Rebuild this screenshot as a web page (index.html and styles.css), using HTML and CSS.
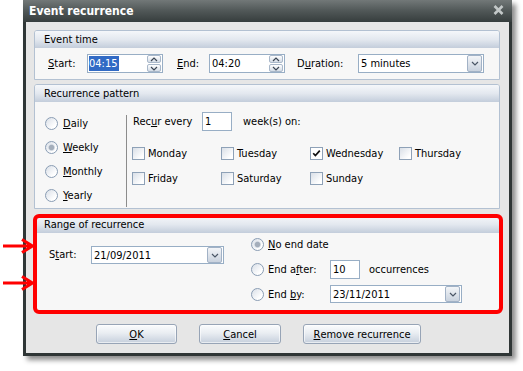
FILE: index.html
```html
<!DOCTYPE html>
<html>
<head>
<meta charset="utf-8">
<link rel="stylesheet" href="styles.css">
</head>
<body>
<div class="dialog">
  <div class="titlebar">
    <span class="title">Event recurrence</span>
    <svg class="close" width="11" height="10" viewBox="0 0 11 10"><path d="M1.5 1 L9.5 9 M9.5 1 L1.5 9" stroke="#c3c8c8" stroke-width="2.6" fill="none"/></svg>
  </div>
  <div class="content">
    <section class="group g-time">
      <div class="ghead">Event time</div>
      <div class="gbody time-row">
        <span class="lbl w-start"><u>S</u>tart:</span>
        <div class="field w-time"><span class="txt"><span class="hl">04:15</span></span>
          <div class="spin"><span class="sb"><svg width="8" height="5" viewBox="0 0 8 5"><path d="M1 4 L4 1 L7 4" stroke="#3c4654" stroke-width="1.2" fill="none"/></svg></span><span class="sb"><svg width="8" height="5" viewBox="0 0 8 5"><path d="M1 1 L4 4 L7 1" stroke="#3c4654" stroke-width="1.2" fill="none"/></svg></span></div>
        </div>
        <span class="lbl w-end"><u>E</u>nd:</span>
        <div class="field w-time"><span class="txt">04:20</span>
          <div class="spin"><span class="sb"><svg width="8" height="5" viewBox="0 0 8 5"><path d="M1 4 L4 1 L7 4" stroke="#3c4654" stroke-width="1.2" fill="none"/></svg></span><span class="sb"><svg width="8" height="5" viewBox="0 0 8 5"><path d="M1 1 L4 4 L7 1" stroke="#3c4654" stroke-width="1.2" fill="none"/></svg></span></div>
        </div>
        <span class="lbl w-dur">D<u>u</u>ration:</span>
        <div class="field w-dursel"><span class="txt">5 minutes</span>
          <span class="ddbtn"><svg width="8" height="5" viewBox="0 0 8 5"><path d="M1 1 L4 4 L7 1" stroke="#4a5666" stroke-width="1.2" fill="none"/></svg></span>
        </div>
      </div>
    </section>

    <section class="group g-pattern">
      <div class="ghead">Recurrence pattern</div>
      <div class="gbody pattern">
        <div class="freq">
          <div class="ropt"><span class="radio"></span><span><u>D</u>aily</span></div>
          <div class="ropt"><span class="radio on"></span><span><u>W</u>eekly</span></div>
          <div class="ropt"><span class="radio"></span><span><u>M</u>onthly</span></div>
          <div class="ropt"><span class="radio"></span><span><u>Y</u>early</span></div>
        </div>
        <div class="sep"></div>
        <div class="weekly">
          <div class="recur">
            <span class="lbl w-recur">Rec<u>u</u>r every</span>
            <div class="field w-num"><span class="txt">1</span></div>
            <span class="weeks">week(s) on:</span>
          </div>
          <div class="days">
            <div class="day"><span class="cb"></span>Monday</div>
            <div class="day"><span class="cb"></span>Tuesday</div>
            <div class="day"><span class="cb on"><svg width="11" height="11" viewBox="0 0 11 11"><path d="M2.2 5.2 L4.4 7.6 L8.8 2.6" stroke="#111" stroke-width="1.7" fill="none"/></svg></span>Wednesday</div>
            <div class="day"><span class="cb"></span>Thursday</div>
            <div class="day"><span class="cb"></span>Friday</div>
            <div class="day"><span class="cb"></span>Saturday</div>
            <div class="day"><span class="cb"></span>Sunday</div>
          </div>
        </div>
      </div>
    </section>

    <section class="group g-range">
      <div class="ghead">Range of recurrence</div>
      <div class="gbody range">
        <div class="rstart">
          <span class="lbl w-rstart">S<u>t</u>art:</span>
          <div class="field w-date"><span class="txt">21/09/2011</span>
            <span class="ddbtn"><svg width="8" height="5" viewBox="0 0 8 5"><path d="M1 1 L4 4 L7 1" stroke="#4a5666" stroke-width="1.2" fill="none"/></svg></span>
          </div>
        </div>
        <div class="rend">
          <div class="eopt"><span class="radio on"></span><span><u>N</u>o end date</span></div>
          <div class="eopt"><span class="radio"></span><span class="w-endlbl">End a<u>f</u>ter:</span>
            <div class="field w-num"><span class="txt">10</span></div><span class="occ">occurrences</span></div>
          <div class="eopt"><span class="radio"></span><span class="w-endlbl">End <u>b</u>y:</span>
            <div class="field w-date2"><span class="txt">23/11/2011</span>
              <span class="ddbtn"><svg width="8" height="5" viewBox="0 0 8 5"><path d="M1 1 L4 4 L7 1" stroke="#4a5666" stroke-width="1.2" fill="none"/></svg></span>
            </div>
          </div>
        </div>
      </div>
    </section>
  </div>
  <div class="buttons">
    <span class="btn b-ok"><u>O</u>K</span>
    <span class="btn b-cancel"><u>C</u>ancel</span>
    <span class="btn b-remove"><u>R</u>emove recurrence</span>
  </div>
</div>
<div class="redbox"></div>
<svg class="arrows" width="40" height="60" viewBox="0 235 40 60">
  <path d="M3 246 L32 246 M22 239.5 L32.5 246 L22 252.5" stroke="#ff0000" stroke-width="3" fill="none"/>
  <path d="M3 283 L32 283 M22 276.5 L32.5 283 L22 289.5" stroke="#ff0000" stroke-width="3" fill="none"/>
</svg>
</body>
</html>
```
FILE: styles.css
```css
html, body {
  margin: 0;
  padding: 0;
  background: #ffffff;
}
body {
  position: relative;
  width: 523px;
  height: 371px;
  overflow: hidden;
  font-family: "DejaVu Sans Condensed", "DejaVu Sans", "Liberation Sans", sans-serif;
  font-stretch: condensed;
  font-size: 11px;
  color: #000;
}
u { text-decoration: underline; text-underline-offset: 1px; }

.dialog {
  margin-left: 23px;
  width: 489px;
  height: 356px;
  box-sizing: border-box;
  background: #e6e6e6;
  border: 3px solid #2f3636;
  border-top: none;
  box-shadow: 4px 4px 5px rgba(0,0,0,0.45);
  display: flex;
  flex-direction: column;
}
.titlebar {
  height: 22px;
  margin: 0 -3px;
  padding: 0 8px 0 6px;
  display: flex;
  align-items: center;
  justify-content: space-between;
  background: linear-gradient(#727878 0%, #535a5a 45%, #363d3d 100%);
  color: #fff;
  font-weight: bold;
  font-size: 12px;
}
.title { margin-top: -1px; }
.close { margin-top: -2px; }

.content {
  padding: 8px 9px 0 8px;
}
.group {
  border: 1px solid #b3c1d2;
  border-radius: 3px 3px 0 0;
  background: #f7f7f7;
}
.ghead {
  height: 17px;
  line-height: 17px;
  padding-left: 9px;
  background: linear-gradient(#f5f7fa 0%, #e3e8ef 50%, #c3cddb 100%);
  border-radius: 2px 2px 0 0;
}
.gbody { box-sizing: border-box; }

.g-time .gbody { height: 31px; }
.g-pattern { margin-top: 4px; }
.g-pattern .gbody { height: 106px; }
.g-range { margin-top: 6px; }
.g-range .gbody { height: 78px; }

.time-row {
  display: flex;
  align-items: center;
  padding-left: 13px;
}
.lbl { display: inline-block; white-space: nowrap; }
.w-start { width: 39px; }
.w-end { width: 32px; margin-left: 14px; }
.w-dur { width: 61px; margin-left: 12px; }

.field {
  position: relative;
  box-sizing: border-box;
  height: 19px;
  border: 1px solid #98aec5;
  background: #fff;
  display: flex;
  align-items: center;
}
.field .txt { padding-left: 2px; white-space: nowrap; }
.hl { background: #316ac5; color: #fff; padding: 1px 1px 1px 0; margin-left: -1px; }
.w-time { width: 76px; }
.w-dursel { width: 126px; }
.w-num { width: 30px; }
.w-date { width: 133px; height: 18px; }
.w-date2 { width: 132px; height: 18px; }

.spin {
  position: absolute;
  right: 1px;
  top: 0;
  display: flex;
  flex-direction: column;
  gap: 1px;
}
.sb {
  box-sizing: border-box;
  width: 14px;
  height: 8px;
  border: 1px solid #a9b8ca;
  border-radius: 2px;
  background: linear-gradient(#ffffff, #d4dce6);
  display: flex;
  align-items: center;
  justify-content: center;
}
.ddbtn {
  position: absolute;
  right: 1px;
  top: 0;
  bottom: 0;
  box-sizing: border-box;
  width: 15px;
  border: 1px solid #a2b2c6;
  border-radius: 2px;
  background: linear-gradient(#f3f5f8, #c9d2de);
  display: flex;
  align-items: center;
  justify-content: center;
}

/* pattern */
.pattern { display: flex; }
.freq {
  width: 91px;
  padding: 9px 0 0 10px;
  box-sizing: border-box;
}
.ropt {
  height: 24px;
  display: flex;
  align-items: center;
  gap: 5px;
}
.radio {
  position: relative;
  box-sizing: border-box;
  width: 13px;
  height: 13px;
  border-radius: 50%;
  border: 1px solid #8a9db4;
  background: linear-gradient(135deg, #d9dfe7, #ffffff 75%);
  flex: none;
}
.radio.on::after {
  content: "";
  position: absolute;
  left: 2px;
  top: 2px;
  width: 7px;
  height: 7px;
  border-radius: 50%;
  background: radial-gradient(circle at 50% 50%, #a4aebb 0, #a4aebb 2.2px, #cfd6df 3px, #e4e8ee 3.5px);
}
.sep {
  width: 1px;
  background: #8c8c8c;
  margin-top: 13px;
  margin-bottom: 1px;
}
.weekly {
  padding: 10px 0 0 5px;
}
.recur {
  display: flex;
  align-items: center;
  height: 19px;
  margin-left: 1px;
}
.w-recur { width: 69px; }
.weeks { margin-left: 11px; }
.days {
  margin-top: 16px;
  display: grid;
  grid-template-columns: 89px 89px 89px 89px;
  row-gap: 12px;
}
.day {
  display: flex;
  align-items: center;
  gap: 3px;
  height: 13px;
}
.cb {
  box-sizing: border-box;
  width: 13px;
  height: 13px;
  border: 1px solid #8ea1b7;
  background: linear-gradient(135deg, #d9dfe7, #ffffff 80%);
  flex: none;
  display: flex;
  align-items: center;
  justify-content: center;
}
.cb.on { background: #fff; }

/* range */
.range { display: flex; }
.rstart {
  width: 216px;
  padding: 13px 0 0 14px;
  box-sizing: border-box;
  display: flex;
  align-items: flex-start;
}
.w-rstart { width: 42px; line-height: 18px; }
.rend {
  padding-top: 1px;
  display: flex;
  flex-direction: column;
  gap: 5px;
}
.eopt {
  height: 20px;
  display: flex;
  align-items: center;
  gap: 4px;
}
.w-endlbl { width: 58px; }
.occ { margin-left: 5px; }

/* buttons */
.buttons {
  margin-top: 12px;
  padding-left: 70px;
  display: flex;
  gap: 22px;
}
.btn {
  box-sizing: border-box;
  height: 20px;
  border: 1px solid #97a4b6;
  border-radius: 3px;
  background: linear-gradient(#fbfcfd 0%, #e9edf2 45%, #c6cfdc 100%);
  box-shadow: inset 0 0 0 1px rgba(255,255,255,0.6);
  display: flex;
  align-items: center;
  justify-content: center;
}
.b-ok { width: 81px; }
.b-cancel { width: 82px; }
.b-remove { width: 118px; }

/* annotation overlays */
.redbox {
  position: absolute;
  left: 33px;
  top: 214px;
  width: 470px;
  height: 100px;
  box-sizing: border-box;
  border: 4px solid #ff0000;
  border-radius: 6px;
}
.arrows {
  position: absolute;
  left: 0;
  top: 235px;
}
```
